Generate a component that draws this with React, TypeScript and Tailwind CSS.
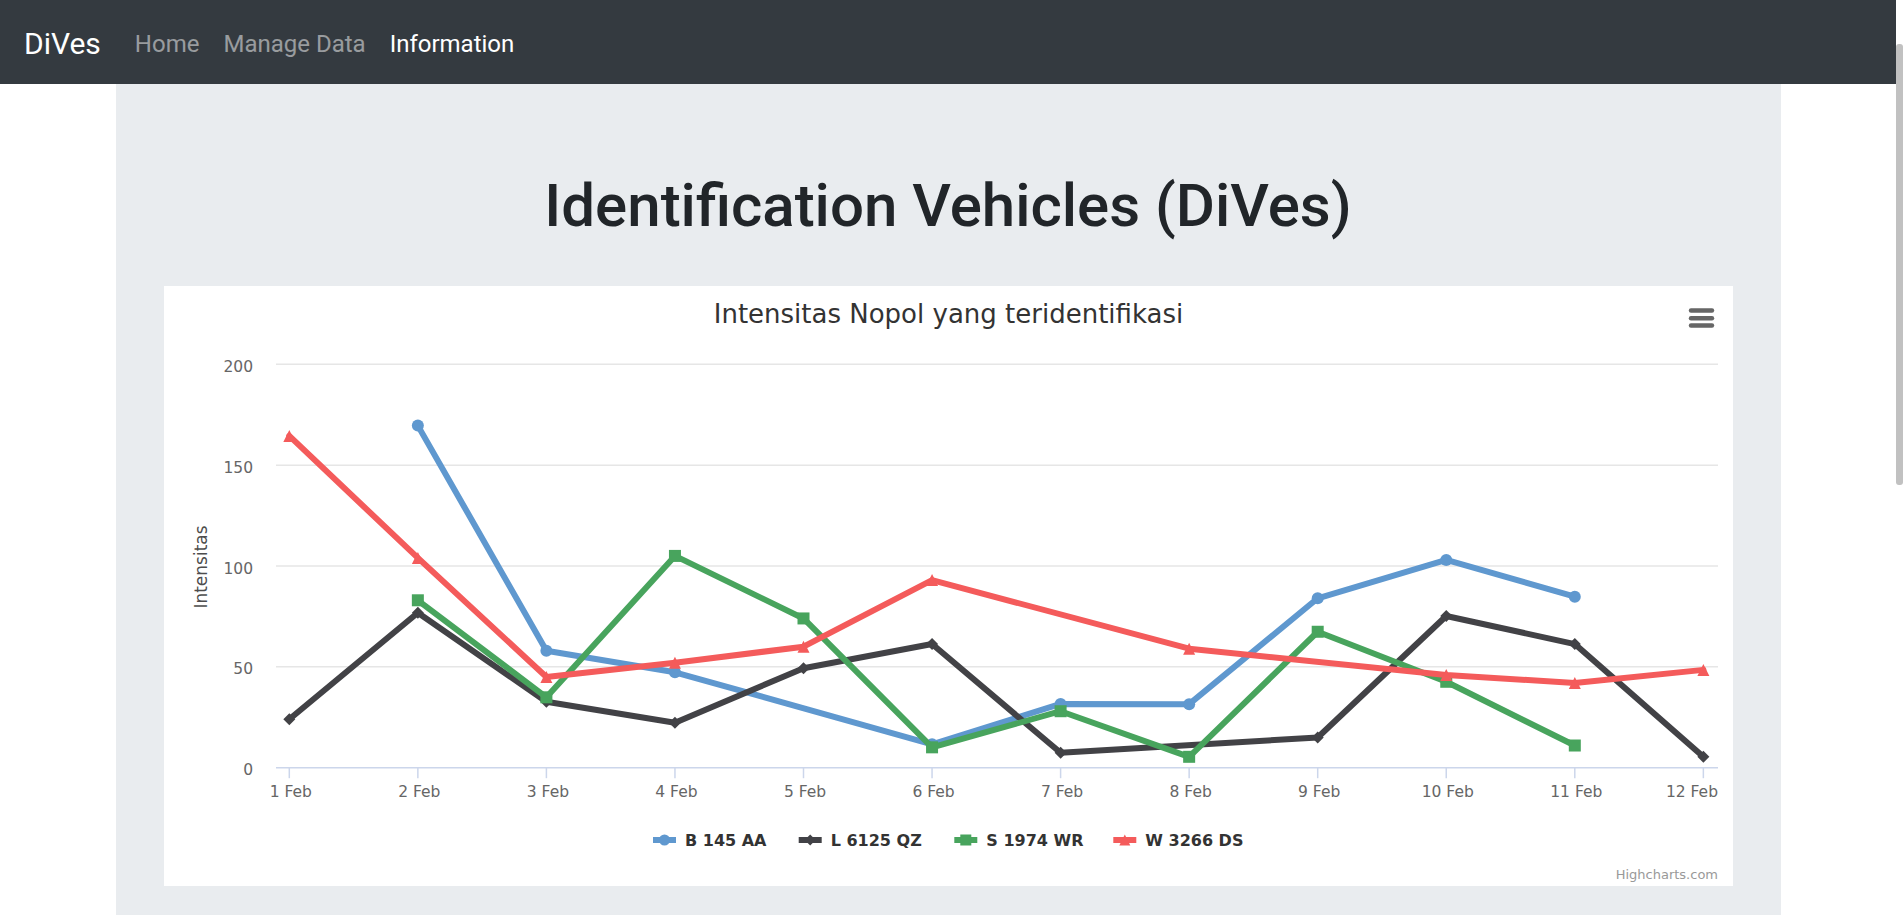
const X0 = 125.3;
const DX = 128.55;
const Y0 = 481.7;
const K = 2.017;

const px = (i: number) => X0 + i * DX;
const py = (v: number) => Y0 - v * K;

type Marker = "circle" | "diamond" | "square" | "triangle";

const SERIES: { name: string; color: string; marker: Marker; data: (number | null)[] }[] = [
  {
    name: "B 145 AA",
    color: "#5f98cf",
    marker: "circle",
    data: [null, 169.6, 58, 47.3, null, 11.6, 31.6, 31.5, 84, 103, 84.8, null],
  },
  {
    name: "L 6125 QZ",
    color: "#424246",
    marker: "diamond",
    data: [24, 76.8, 32.7, 22.3, 49.3, 61.3, 7.4, null, 15, 75.2, 61.3, 5.4],
  },
  {
    name: "S 1974 WR",
    color: "#48a45d",
    marker: "square",
    data: [null, 83, 34.9, 105, 74, 10.1, 28, 5.4, 67.4, 42.6, 11, null],
  },
  {
    name: "W 3266 DS",
    color: "#f45b5b",
    marker: "triangle",
    data: [164.5, 104, 45, 52, 60, 93, null, 59, null, 46, 42, 48.5],
  },
];

const LEGEND_X = [489, 634.7, 790.3, 949.3];

function Symbol({ type, x, y, r, color }: { type: Marker; x: number; y: number; r: number; color: string }) {
  if (type === "circle") return <circle cx={x} cy={y} r={r} fill={color} />;
  if (type === "square") return <rect x={x - r} y={y - r} width={r * 2} height={r * 2} fill={color} />;
  if (type === "diamond")
    return <polygon points={`${x},${y - r} ${x + r},${y} ${x},${y + r} ${x - r},${y}`} fill={color} />;
  return <polygon points={`${x},${y - r} ${x + r},${y + r} ${x - r},${y + r}`} fill={color} />;
}

function Grafik() {
  const days = Array.from({ length: 12 }, (_, i) => `${i + 1} Feb`);
  return (
    <svg width="1569" height="600" viewBox="0 0 1569 600" style={{ fontFamily: '"DejaVu Sans", sans-serif' }}>
      <rect width="1569" height="600" fill="#ffffff" />
      <text x="784.5" y="37" textAnchor="middle" fontSize="26" fill="#333333">
        Intensitas Nopol yang teridentifikasi
      </text>

      {/* menu kontekstual */}
      <g stroke="#666666" strokeWidth="4.4" strokeLinecap="round">
        <line x1="1527" y1="24.5" x2="1548" y2="24.5" />
        <line x1="1527" y1="32.2" x2="1548" y2="32.2" />
        <line x1="1527" y1="39.5" x2="1548" y2="39.5" />
      </g>

      {/* grid + label sumbu Y */}
      {[200, 150, 100, 50].map((v) => (
        <line key={v} x1="112" x2="1554" y1={py(v)} y2={py(v)} stroke="#e6e6e6" strokeWidth="1.5" />
      ))}
      {[200, 150, 100, 50, 0].map((v) => (
        <text key={v} x="89" y={py(v) + 7.5} textAnchor="end" fontSize="15.5" fill="#666666">
          {v}
        </text>
      ))}
      <text x="43" y="281" transform="rotate(-90 43 281)" textAnchor="middle" fontSize="17" fill="#4d4d4d">
        Intensitas
      </text>

      {/* sumbu X */}
      <line x1="112" x2="1554" y1={Y0} y2={Y0} stroke="#ccd6eb" strokeWidth="1.5" />
      {days.map((d, i) => {
        const last = i === days.length - 1;
        return (
          <g key={d}>
            <line x1={px(i)} x2={px(i)} y1={Y0} y2={Y0 + 10.5} stroke="#ccd6eb" strokeWidth="1.5" />
            <text
              x={last ? 1554 : px(i) + 1.5}
              y="511"
              textAnchor={last ? "end" : "middle"}
              fontSize="15.5"
              fill="#666666"
            >
              {d}
            </text>
          </g>
        );
      })}

      {/* seri */}
      {SERIES.map((s) => {
        const pts = s.data
          .map((v, i) => (v === null ? null : [px(i), py(v)]))
          .filter((p): p is number[] => p !== null);
        return (
          <g key={s.name}>
            <polyline
              points={pts.map((p) => p.join(",")).join(" ")}
              fill="none"
              stroke={s.color}
              strokeWidth="6"
              strokeLinejoin="round"
              strokeLinecap="round"
            />
            {pts.map((p, i) => (
              <Symbol key={i} type={s.marker} x={p[0]} y={p[1]} r={6} color={s.color} />
            ))}
          </g>
        );
      })}

      {/* legenda */}
      {SERIES.map((s, i) => (
        <g key={s.name}>
          <line x1={LEGEND_X[i]} x2={LEGEND_X[i] + 23} y1="554" y2="554" stroke={s.color} strokeWidth="6" />
          <Symbol type={s.marker} x={LEGEND_X[i] + 11.5} y={554} r={5.5} color={s.color} />
          <text x={LEGEND_X[i] + 32} y="560" fontSize="16" fontWeight="bold" fill="#333333">
            {s.name}
          </text>
        </g>
      ))}

      <text x="1554" y="593" textAnchor="end" fontSize="13" fill="#999999">
        Highcharts.com
      </text>
    </svg>
  );
}

export default function App() {
  return (
    <div className="flex h-[915px] overflow-hidden bg-white font-['Roboto','Noto_Sans',sans-serif] text-[#212529]">
      <div className="w-[1896px] shrink-0">
        <nav className="flex h-[84px] items-center bg-[#343a40] px-6">
          <a href="#" className="mr-[22px] pt-[2px] text-[30px] leading-[45px] text-white">
            DiVes
          </a>
          <ul className="flex items-center pt-[3px]">
            <li>
              <a href="#" className="block px-3 text-[24px] leading-9 text-white/50">
                Home
              </a>
            </li>
            <li>
              <a href="#" className="block px-3 text-[24px] leading-9 text-white/50">
                Manage Data
              </a>
            </li>
            <li>
              <a href="#" className="block px-3 text-[24px] leading-9 text-white">
                Information
              </a>
            </li>
          </ul>
        </nav>

        <main className="mx-auto w-[1665px] bg-[#e9ecef] px-12 pt-[86px] pb-[29px]">
          <h1 className="text-center text-[60px] font-medium leading-[72px] text-[#212529]">
            Identification Vehicles (DiVes)
          </h1>
          <div className="mt-[44px] bg-white">
            <Grafik />
          </div>
        </main>
      </div>

      {/* scrollbar halaman */}
      <div className="w-[7px] shrink-0 bg-white pt-[44px]">
        <div className="h-[441px] w-full rounded-[3px] bg-[#c1c1c1]" />
      </div>
    </div>
  );
}
